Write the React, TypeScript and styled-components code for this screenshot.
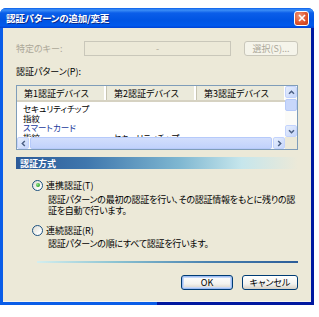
import React from 'react'
import styled, { createGlobalStyle } from 'styled-components'

const GlobalStyle = createGlobalStyle`
  html, body {
    margin: 0;
    padding: 0;
    background: #ffffff;
  }
  body {
    font-family: "Noto Sans CJK JP", "Noto Sans", sans-serif;
    font-size: 9px;
    font-feature-settings: "palt";
  }
`

const Window = styled.div`
  margin-top: 8px;
  width: 314px;
  height: 297px;
  box-sizing: border-box;
  display: flex;
  flex-direction: column;
  border-radius: 6px 6px 0 0;
  overflow: hidden;
  background: #0054e3;
`

const TitleBar = styled.div`
  height: 20px;
  flex: none;
  display: flex;
  align-items: center;
  justify-content: space-between;
  padding: 0 5px 0 6px;
  background: linear-gradient(
    to bottom,
    #0a5fea 0%,
    #3d8ff7 10%,
    #0b5ee9 25%,
    #0054e3 60%,
    #0059ec 88%,
    #0042d6 100%
  );
`

const Title = styled.span`
  color: #ffffff;
  font-weight: bold;
  font-size: 9.5px;
  letter-spacing: -0.2px;
  text-shadow: 1px 1px 0 #0a2a8c;
`

const CloseButton = styled.div`
  width: 13px;
  height: 13px;
  border: 1px solid #ffffff;
  border-radius: 3px;
  background: radial-gradient(circle at 35% 30%, #f19a7c 0%, #e0562f 55%, #c23b17 100%);
  display: flex;
  align-items: center;
  justify-content: center;
`

const FrameEdges = styled.div`
  flex: 1;
  display: flex;
  flex-direction: column;
  background: linear-gradient(to right, #0a5de8 0%, #0a5de8 50%, #0018a0 50%, #0018a0 100%);
`

const Body = styled.div`
  flex: 1;
  display: flex;
  flex-direction: column;
  background: #ece9d8;
  margin: 0 3px 3px 3px;
  padding: 0 13px;
  box-shadow: inset 0 -1px 0 #f5f4ee;
`

const KeyRow = styled.div`
  display: flex;
  align-items: center;
  margin-top: 13px;
  height: 15px;
`

const DimLabel = styled.span`
  color: #aca899;
  width: 68px;
  flex: none;
`

const DisabledInput = styled.div`
  width: 147px;
  height: 15px;
  box-sizing: border-box;
  border: 1px solid #c9c7ba;
  background: #ece9d8;
  color: #aca899;
  display: flex;
  align-items: center;
  justify-content: center;
`

const Button = styled.div<{ $disabled?: boolean; $default?: boolean; $w: number }>`
  width: ${(p) => p.$w}px;
  height: 15px;
  box-sizing: border-box;
  border-radius: 3px;
  display: flex;
  align-items: center;
  justify-content: center;
  border: 1px solid ${(p) => (p.$disabled ? '#c9c7ba' : '#003c74')};
  background: ${(p) =>
    p.$disabled ? '#f5f4ea' : 'linear-gradient(to bottom, #ffffff 0%, #f3f3ef 60%, #d6d0c5 100%)'};
  color: ${(p) => (p.$disabled ? '#aca899' : '#000000')};
  box-shadow: ${(p) => (p.$default ? 'inset 0 0 0 1px #9fbef3, inset 0 0 0 2px #c6d8f8' : 'none')};
`

const SelectButton = styled(Button)`
  margin-left: auto;
`

const Label = styled.div`
  margin-top: 10px;
  height: 12px;
  line-height: 12px;
  color: #000000;
`

const ListView = styled.div`
  margin-top: 7px;
  height: 65px;
  box-sizing: border-box;
  border: 1px solid #7f9db9;
  background: #ffffff;
  display: grid;
  grid-template-columns: 1fr 12px;
  grid-template-rows: 1fr 12px;
  overflow: hidden;
`

const ListMain = styled.div`
  overflow: hidden;
  display: flex;
  flex-direction: column;
`

const Header = styled.div`
  display: flex;
  height: 14px;
  flex: none;
  background: #ebeadb;
  border-bottom: 2px solid #d6d2c2;
`

const HeaderCell = styled.div`
  width: 90px;
  flex: none;
  padding-left: 7px;
  box-sizing: border-box;
  display: flex;
  align-items: center;
  border-right: 1px solid #c7c5b2;
  box-shadow: inset -2px 0 0 #ffffff;
`

const Rows = styled.div`
  overflow: hidden;
  padding-top: 2px;
`

const Row = styled.div`
  display: flex;
  height: 9.5px;
  line-height: 9.5px;
  font-size: 8.5px;
`

const Cell = styled.div<{ $blue?: boolean }>`
  width: 90px;
  flex: none;
  padding-left: 6px;
  box-sizing: border-box;
  white-space: nowrap;
  color: ${(p) => (p.$blue ? '#1a3a9c' : '#000000')};
`

const VScroll = styled.div`
  display: flex;
  flex-direction: column;
  background: #fbfbf8;
`

const HScroll = styled.div`
  display: flex;
  background: #fbfbf8;
`

const ScrollBtn = styled.div`
  width: 12px;
  height: 12px;
  flex: none;
  box-sizing: border-box;
  border: 1px solid #c3d3fd;
  border-radius: 2px;
  background: linear-gradient(135deg, #e6eefc 0%, #c6d6fb 100%);
  display: flex;
  align-items: center;
  justify-content: center;
`

const VThumb = styled.div`
  height: 12px;
  margin-top: 1px;
  box-sizing: border-box;
  border: 1px solid #b6cafa;
  border-radius: 2px;
  background: #c8d7fb;
`

const HThumb = styled.div`
  flex: 1;
  margin: 0 1px;
  box-sizing: border-box;
  border: 1px solid #b6cafa;
  border-radius: 2px;
  background: linear-gradient(to bottom, #d2defc 0%, #c1d2fb 100%);
`

const Spacer = styled.div`
  flex: 1;
`

const Corner = styled.div`
  background: #ece9d8;
`

const SectionHeader = styled.div`
  margin-top: 7px;
  height: 12px;
  display: flex;
  align-items: center;
  padding-left: 4px;
  color: #ffffff;
  font-weight: bold;
  background: linear-gradient(
    to right,
    #2c5a98 0%,
    #3f77ad 25%,
    #7fb7d1 58%,
    #c6e6ec 80%,
    #ece9d8 100%
  );
`

const RadioRow = styled.div<{ $top: number }>`
  margin-top: ${(p) => p.$top}px;
  height: 12px;
  display: flex;
  align-items: center;
  gap: 3px;
  padding-left: 16px;
`

const RadioCircle = styled.div<{ $checked?: boolean }>`
  width: 9px;
  height: 9px;
  border-radius: 50%;
  border: 1px solid #1c5180;
  background: linear-gradient(135deg, #dcdbd2 0%, #ffffff 80%);
  display: flex;
  align-items: center;
  justify-content: center;
  &::after {
    content: '';
    display: ${(p) => (p.$checked ? 'block' : 'none')};
    width: 4px;
    height: 4px;
    border-radius: 50%;
    background: radial-gradient(circle at 35% 35%, #8fe38a 0%, #2fa52b 70%);
  }
`

const Description = styled.div<{ $top: number }>`
  margin-top: ${(p) => p.$top}px;
  padding-left: 32px;
  line-height: 11px;
  white-space: nowrap;
  letter-spacing: -0.25px;
`

const Separator = styled.div`
  margin-top: 12px;
  margin-left: 21px;
  height: 2px;
  background: linear-gradient(to right, #d4eeee 0%, #8cc3d2 30%, #4a82b0 65%, #2b5c98 100%);
`

const ButtonRow = styled.div`
  margin-top: 12px;
  display: flex;
  justify-content: flex-end;
  gap: 9px;
`

const Arrow = ({ dir }: { dir: 'up' | 'down' | 'left' | 'right' }) => {
  const rot = { up: 0, right: 90, down: 180, left: 270 }[dir]
  return (
    <svg width="7" height="7" viewBox="0 0 7 7" style={{ transform: `rotate(${rot}deg)` }}>
      <path d="M1 4.8 L3.5 2.3 L6 4.8" fill="none" stroke="#4d6185" strokeWidth="1.5" />
    </svg>
  )
}

const rows: [string, string, string, boolean?][] = [
  ['セキュリティチップ', '', ''],
  ['指紋', '', ''],
  ['スマートカード', '', '', true],
  ['指紋', 'セキュリティチップ', ''],
]

export default function App() {
  return (
    <>
      <GlobalStyle />
      <Window>
        <TitleBar>
          <Title>認証パターンの追加/変更</Title>
          <CloseButton>
            <svg width="8" height="8" viewBox="0 0 8 8">
              <path d="M1 1 L7 7 M7 1 L1 7" stroke="#ffffff" strokeWidth="1.6" />
            </svg>
          </CloseButton>
        </TitleBar>
        <FrameEdges>
          <Body>
            <KeyRow>
              <DimLabel>特定のキー:</DimLabel>
              <DisabledInput>-</DisabledInput>
              <SelectButton $disabled $w={54}>
                選択(S)...
              </SelectButton>
            </KeyRow>
            <Label>認証パターン(P):</Label>
            <ListView>
              <ListMain>
                <Header>
                  <HeaderCell>第1認証デバイス</HeaderCell>
                  <HeaderCell>第2認証デバイス</HeaderCell>
                  <HeaderCell>第3認証デバイス</HeaderCell>
                </Header>
                <Rows>
                  {rows.map(([a, b, c, blue], i) => (
                    <Row key={i}>
                      <Cell $blue={blue}>{a}</Cell>
                      <Cell>{b}</Cell>
                      <Cell>{c}</Cell>
                    </Row>
                  ))}
                </Rows>
              </ListMain>
              <VScroll>
                <ScrollBtn>
                  <Arrow dir="up" />
                </ScrollBtn>
                <VThumb />
                <Spacer />
                <ScrollBtn>
                  <Arrow dir="down" />
                </ScrollBtn>
              </VScroll>
              <HScroll>
                <ScrollBtn>
                  <Arrow dir="left" />
                </ScrollBtn>
                <HThumb />
                <ScrollBtn>
                  <Arrow dir="right" />
                </ScrollBtn>
              </HScroll>
              <Corner />
            </ListView>
            <SectionHeader>認証方式</SectionHeader>
            <RadioRow $top={10}>
              <RadioCircle $checked />
              <span>連携認証(T)</span>
            </RadioRow>
            <Description $top={3}>
              認証パターンの最初の認証を行い、その認証情報をもとに残りの認
              <br />
              証を自動で行います。
            </Description>
            <RadioRow $top={8}>
              <RadioCircle />
              <span>連続認証(R)</span>
            </RadioRow>
            <Description $top={2}>認証パターンの順にすべて認証を行います。</Description>
            <Separator />
            <ButtonRow>
              <Button $default $w={52}>
                OK
              </Button>
              <Button $w={56}>キャンセル</Button>
            </ButtonRow>
          </Body>
        </FrameEdges>
      </Window>
    </>
  )
}
